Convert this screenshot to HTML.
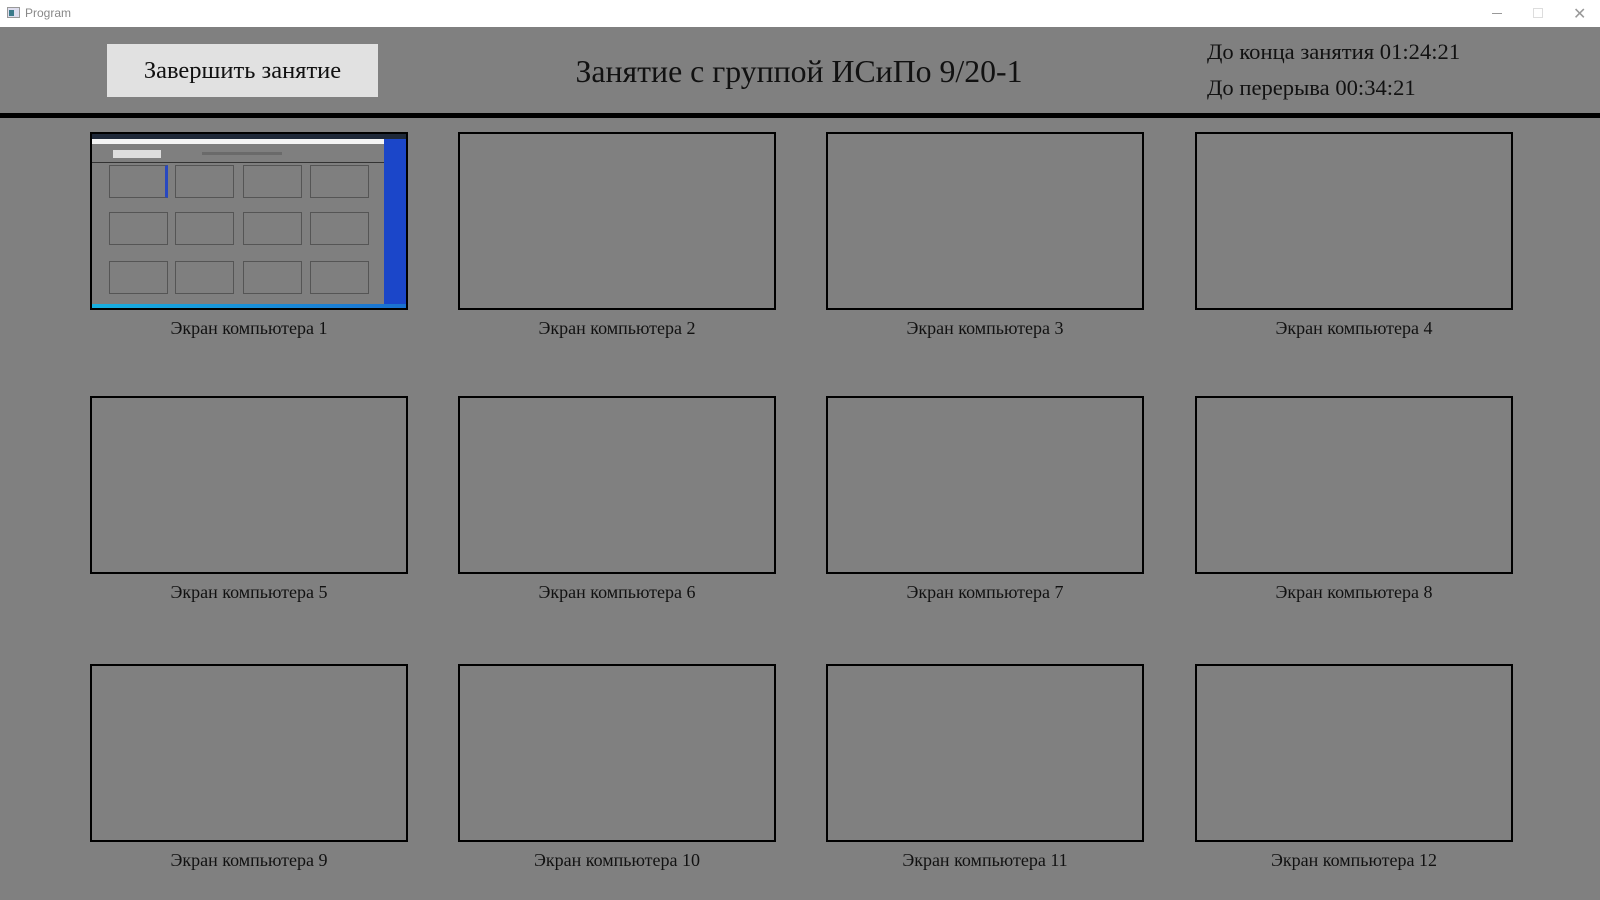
<!DOCTYPE html>
<html><head><meta charset="utf-8"><style>
*{margin:0;padding:0;box-sizing:border-box}
body{width:1600px;height:900px;background:#808080;position:relative;overflow:hidden;font-family:"Liberation Serif","Noto Serif CJK SC",serif;color:#111}
.tb{position:absolute;left:0;top:0;width:1600px;height:27px;background:#fff}
.tb .t{position:absolute;left:25px;top:6px;font:12px "Liberation Sans",sans-serif;color:#888}
.a{position:absolute}
.box{position:absolute;width:318px;height:178px;border:2px solid #000}
.lbl{position:absolute;width:318px;text-align:center;font-size:18px;line-height:20px;white-space:nowrap}
.th div{position:absolute}
</style></head><body>
<div class="tb">
  <div class="a" style="left:7px;top:7px;width:13px;height:11px;border:1px solid #999;background:#dde"><div class="a" style="left:1px;top:2px;width:5px;height:6px;background:#3a7a8a"></div></div>
  <div class="t">Program</div>
  <div class="a" style="left:1492px;top:13px;width:10px;height:1px;background:#999"></div>
  <div class="a" style="left:1533px;top:8px;width:10px;height:10px;border:1px solid #ddd"></div>
  <div class="a" style="left:1573px;top:4px;font:16px 'Liberation Sans',sans-serif;color:#999">✕</div>
</div>
<div class="a" style="left:107px;top:44px;width:271px;height:53px;background:#e1e1e1;text-align:center;line-height:53px;font-size:24.5px;white-space:nowrap">Завершить занятие</div>
<div class="a" style="left:556px;top:52px;width:486px;text-align:center;font-size:31.8px;line-height:40px;white-space:nowrap">Занятие с группой ИСиПо 9/20-1</div>
<div class="a" style="left:1207px;top:39px;font-size:22.6px;line-height:26px;white-space:nowrap">До конца занятия 01:24:21</div>
<div class="a" style="left:1207px;top:75px;font-size:22.6px;line-height:26px;white-space:nowrap">До перерыва 00:34:21</div>
<div class="a" style="left:0;top:113px;width:1600px;height:5px;background:#000"></div>

<div class="box" style="left:90px;top:132px;overflow:hidden">
 <div class="th a" style="left:0;top:0;width:316px;height:176px;background:#7f7f7f">
  <div style="left:0;top:0;width:316px;height:5px;background:#1e2838"></div>
  <div style="left:0;top:5px;width:292px;height:5px;background:#f4f4f4"></div>
  <div style="left:292px;top:5px;width:24px;height:166px;background:#1b46c9"></div>
  <div style="left:0;top:170px;width:316px;height:6px;background:linear-gradient(90deg,#18b0e0,#1a70d0)"></div>
  <div style="left:21px;top:16px;width:48px;height:8px;background:#ddd"></div>
  <div style="left:110px;top:18px;width:80px;height:3px;background:#555;opacity:.5"></div>
  <div style="left:0;top:28px;width:292px;height:1px;background:#333"></div>
  <div style="left:17px;top:31px;width:59px;height:33px;border:1px solid #555;border-right:3px solid #2848c0"></div>
  <div style="left:83px;top:31px;width:59px;height:33px;border:1px solid #555"></div>
  <div style="left:151px;top:31px;width:59px;height:33px;border:1px solid #555"></div>
  <div style="left:218px;top:31px;width:59px;height:33px;border:1px solid #555"></div>
  <div style="left:17px;top:78px;width:59px;height:33px;border:1px solid #555"></div>
  <div style="left:83px;top:78px;width:59px;height:33px;border:1px solid #555"></div>
  <div style="left:151px;top:78px;width:59px;height:33px;border:1px solid #555"></div>
  <div style="left:218px;top:78px;width:59px;height:33px;border:1px solid #555"></div>
  <div style="left:17px;top:127px;width:59px;height:33px;border:1px solid #555"></div>
  <div style="left:83px;top:127px;width:59px;height:33px;border:1px solid #555"></div>
  <div style="left:151px;top:127px;width:59px;height:33px;border:1px solid #555"></div>
  <div style="left:218px;top:127px;width:59px;height:33px;border:1px solid #555"></div>
 </div>
</div>
<div class="box" style="left:458px;top:132px"></div>
<div class="box" style="left:826px;top:132px"></div>
<div class="box" style="left:1195px;top:132px"></div>
<div class="box" style="left:90px;top:396px"></div>
<div class="box" style="left:458px;top:396px"></div>
<div class="box" style="left:826px;top:396px"></div>
<div class="box" style="left:1195px;top:396px"></div>
<div class="box" style="left:90px;top:664px"></div>
<div class="box" style="left:458px;top:664px"></div>
<div class="box" style="left:826px;top:664px"></div>
<div class="box" style="left:1195px;top:664px"></div>

<div class="lbl" style="left:90px;top:318px">Экран компьютера 1</div>
<div class="lbl" style="left:458px;top:318px">Экран компьютера 2</div>
<div class="lbl" style="left:826px;top:318px">Экран компьютера 3</div>
<div class="lbl" style="left:1195px;top:318px">Экран компьютера 4</div>
<div class="lbl" style="left:90px;top:582px">Экран компьютера 5</div>
<div class="lbl" style="left:458px;top:582px">Экран компьютера 6</div>
<div class="lbl" style="left:826px;top:582px">Экран компьютера 7</div>
<div class="lbl" style="left:1195px;top:582px">Экран компьютера 8</div>
<div class="lbl" style="left:90px;top:850px">Экран компьютера 9</div>
<div class="lbl" style="left:458px;top:850px">Экран компьютера 10</div>
<div class="lbl" style="left:826px;top:850px">Экран компьютера 11</div>
<div class="lbl" style="left:1195px;top:850px">Экран компьютера 12</div>
</body></html>
